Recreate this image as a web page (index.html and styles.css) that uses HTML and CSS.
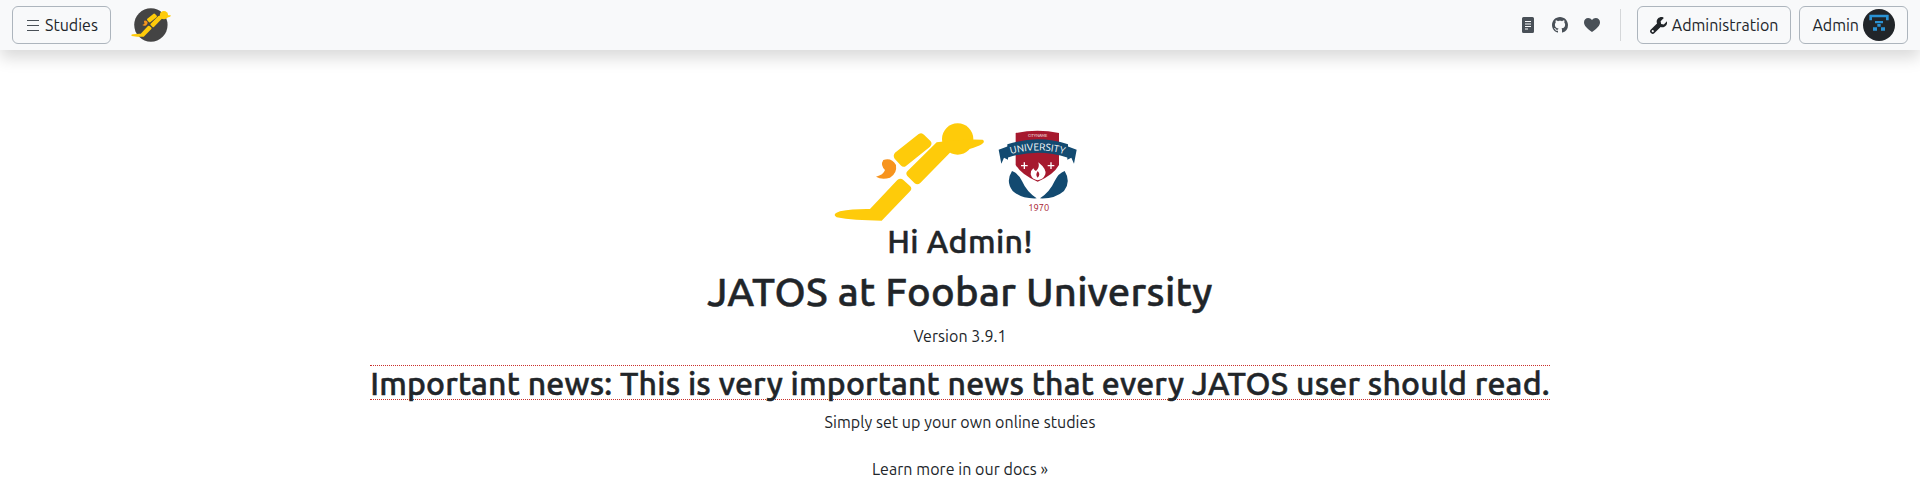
FILE: index.html
```html
<!DOCTYPE html>
<html lang="en">
<head>
    <meta charset="UTF-8">
    <title>JATOS</title>
    <link rel="stylesheet" href="styles.css">
</head>
<body>
<nav class="topbar">
    <div class="topbar-left">
        <a class="btn"><span class="bars"><i></i><i></i><i></i></span>Studies</a>
        <svg class="logo-small" viewBox="0 0 540 360" width="60" height="40">
            <circle cx="260" cy="180" r="150" fill="#444"/>
            <g transform="translate(49 22) scale(.795)">
                <circle cx="413" cy="87" r="47" fill="#fecb0a"/>
                <path d="M350 97 Q420 86 488 89 Q498 96 480 106 Q440 124 392 126 L300 220 Q292 226 284 220 L262 198 Q256 190 262 184Z" fill="#fecb0a"/>
                <path d="M225 128 L296 72 Q305 66 312 74 L332 94 Q338 102 330 110 L258 168 Q250 174 242 166 L224 146 Q218 136 225 128Z" fill="#fecb0a"/>
                <path d="M232 210 Q242 202 250 210 L270 228 Q278 236 270 244 L185 332 Q100 332 50 322 Q34 312 60 304 Q100 296 150 297Z" fill="#fecb0a"/>
                <path d="M190 150 Q215 142 228 165 Q232 190 210 203 Q185 210 168 200 Q190 195 195 180 Q180 165 190 150Z" fill="#f7941e"/>
            </g>
        </svg>
    </div>
    <div class="topbar-right">
        <div class="icons">
            <svg viewBox="0 0 16 16" width="16" height="16"><path fill="#495057" fill-rule="evenodd" d="M3.500 0h9A1.500 1.500 0 0 1 14 1.500v13a1.500 1.500 0 0 1-1.500 1.500h-9A1.500 1.500 0 0 1 2 14.500v-13A1.500 1.500 0 0 1 3.500 0zM5 4v1h6V4H5zm0 2.500v1h6v-1H5zM5 9v1h6V9H5zm0 2.500v1h3v-1H5z"/></svg>
            <svg viewBox="0 0 16 16" width="16" height="16"><path fill="#495057" d="M8 0C3.58 0 0 3.58 0 8c0 3.540 2.290 6.530 5.470 7.590.4.070.55-.17.55-.38 0-.19-.01-.82-.01-1.490-2.010.37-2.530-.49-2.690-.94-.09-.23-.48-.94-.82-1.130-.28-.15-.68-.52-.01-.53.63-.01 1.080.58 1.230.82.72 1.210 1.870.87 2.330.66.07-.52.28-.87.51-1.070-1.780-.2-3.640-.89-3.640-3.950 0-.87.31-1.590.82-2.150-.08-.2-.36-1.020.08-2.120 0 0 .67-.21 2.200.82.64-.18 1.320-.27 2-.27s1.360.09 2 .27c1.530-1.040 2.200-.82 2.200-.82.44 1.100.16 1.920.08 2.120.51.56.82 1.270.82 2.150 0 3.070-1.870 3.750-3.650 3.950.29.25.54.73.54 1.480 0 1.070-.01 1.930-.01 2.200 0 .21.15.46.55.38A8.010 8.010 0 0 0 16 8c0-4.420-3.580-8-8-8z"/></svg>
            <svg viewBox="0 0 16 16" width="16" height="16"><path fill="#495057" d="M8 15C3 11.500 0 8.500 0 5.200 0 2.800 1.900 1 4.200 1 5.700 1 7.100 1.800 8 3.100 8.900 1.800 10.300 1 11.800 1 14.100 1 16 2.800 16 5.200 16 8.500 13 11.500 8 15z"/></svg>
        </div>
        <div class="divider"></div>
        <a class="btn btn-admin"><svg viewBox="0 0 16 16" width="17" height="17"><path fill="#212529" fill-rule="evenodd" d="M16 4l-3 3-2.500-.5L10 4l3-3-.8-.8C10.500-.300 8.700.200 7.500 1.400 6.200 2.700 6 4.500 6.600 6L.6 12c-.8.800-.8 2 0 2.800l.6.600c.8.800 2 .8 2.800 0l6-6c1.500.6 3.300.4 4.600-.9 1.300-1.300 1.800-3.100 1.400-4.800zM2.600 12.300a1 1 0 1 1 0 2 1 1 0 0 1 0-2z"/></svg>Administration</a>
        <a class="btn">Admin<svg class="avatar" viewBox="0 0 96 96" width="32" height="32">
            <circle cx="48" cy="48" r="48" fill="#212529"/>
            <path fill="#2a93d5" d="M19 17h58v17h-8v-9H27v9h-8zM36 36h24v7H36zM30 55h12v10H30zM54 55h12v10H54zM43 45h10v8H43z"/>
        </svg></a>
    </div>
</nav>
<main class="welcome">
    <div class="logos">
        <svg viewBox="0 39 495 297" width="165" height="99">
            <circle cx="413" cy="87" r="47" fill="#fecb0a"/>
            <path d="M350 97 Q420 86 488 89 Q498 96 480 106 Q440 124 392 126 L300 220 Q292 226 284 220 L262 198 Q256 190 262 184Z" fill="#fecb0a"/>
            <path d="M225 128 L296 72 Q305 66 312 74 L332 94 Q338 102 330 110 L258 168 Q250 174 242 166 L224 146 Q218 136 225 128Z" fill="#fecb0a"/>
            <path d="M232 210 Q242 202 250 210 L270 228 Q278 236 270 244 L185 332 Q100 332 50 322 Q34 312 60 304 Q100 296 150 297Z" fill="#fecb0a"/>
            <path d="M190 150 Q215 142 228 165 Q232 190 210 203 Q185 210 168 200 Q190 195 195 180 Q180 165 190 150Z" fill="#f7941e"/>
        </svg>
        <svg viewBox="45 24 345 297" width="115" height="99">
            <path d="M137 54 Q203 40 267 54 V150 Q250 180 203 200 Q155 180 137 150Z" fill="#a6192e"/>
            <path d="M86 104 L114 94 V134 L102 128 L94 146Z M320 104 L292 94 V134 L304 128 L312 146Z" fill="#134a70"/>
            <path d="M112 88 Q203 58 294 88 V128 Q203 98 112 128Z" fill="#134a70"/>
            <path id="ribbonText" d="M114 120 Q203 92 292 120" fill="none"/>
            <text class="crest-name"><textPath href="#ribbonText" startOffset="50%">UNIVERSITY</textPath></text>
            <text x="203" y="66" class="crest-city">CITYNAME</text>
            <path d="M205 142 Q230 162 226 178 Q220 194 203 196 Q186 194 182 178 Q182 166 190 160 Q194 168 198 168 Q210 158 205 142Z" fill="#fff"/>
            <path d="M203 168 Q213 178 203 188 Q195 180 203 168Z" fill="#a6192e"/>
            <path d="M153 152h20M163 142v20M233 152h20M243 142v20" stroke="#fff" stroke-width="4"/>
            <path d="M126 168 Q106 200 128 228 Q155 252 200 250 Q170 230 156 198 Q144 174 126 168Z" fill="#134a70"/>
            <path d="M284 168 Q304 200 282 228 Q255 252 210 250 Q240 230 254 198 Q266 174 284 168Z" fill="#134a70"/>
            <text x="206" y="287" class="crest-year">1970</text>
        </svg>
    </div>
    <h2 class="hi">Hi Admin!</h2>
    <h1 class="title">JATOS at Foobar University</h1>
    <p class="line version">Version 3.9.1</p>
    <h2 class="news">Important news: This is very important news that every JATOS user should read.</h2>
    <p class="line">Simply set up your own online studies</p>
    <p class="line more">Learn more in our docs »</p>
</main>
</body>
</html>
```

FILE: styles.css
```css
* {
    box-sizing: border-box;
}

body {
    margin: 0;
    font-family: "Ubuntu", "Noto Sans", sans-serif;
    color: #212529;
    background: #fff;
}

.topbar {
    height: 50px;
    padding: 0 12px;
    background: #f8f9fa;
    box-shadow: 0 8px 16px rgba(0, 0, 0, .15);
    display: flex;
    justify-content: space-between;
    align-items: center;
}

.topbar-left, .topbar-right, .icons {
    display: flex;
    align-items: center;
}

.topbar-left {
    gap: 11px;
}

.topbar-right {
    gap: 8px;
}

.icons {
    gap: 16px;
}

.divider {
    width: 1px;
    height: 32px;
    background: #d5d7d9;
    margin: 0 8px 0 12px;
}

.btn {
    display: flex;
    align-items: center;
    gap: 4px;
    height: 38px;
    padding: 0 12px;
    border: 1px solid #adb5bd;
    border-radius: 6px;
    font-size: 16px;
}

.btn-admin {
    gap: 5px;
}

.bars {
    width: 12px;
    margin: 0 2px;
    display: flex;
    flex-direction: column;
    gap: 4px;
}

.bars i {
    height: 1px;
    background: #495057;
}

.welcome {
    padding-top: 73px;
    display: flex;
    flex-direction: column;
    align-items: center;
}

.logos {
    display: flex;
}

.crest-name {
    font-size: 30px;
    fill: #fff;
    text-anchor: middle;
}

.crest-city {
    font-size: 12px;
    fill: #fff;
    text-anchor: middle;
}

.crest-year {
    font-size: 28px;
    fill: #a6192e;
    text-anchor: middle;
}

.hi, .title, .news {
    font-weight: 500;
    -webkit-text-stroke: .5px #212529;
}

.hi {
    margin: 0;
    font-size: 32px;
    line-height: 38px;
    letter-spacing: .4px;
}

.title {
    margin: 8px 0;
    font-size: 40px;
    line-height: 48px;
    letter-spacing: .28px;
}

.line {
    margin: 0 0 23px;
    font-size: 16px;
    line-height: 24px;
    letter-spacing: .05px;
}

.version {
    margin-bottom: 17px;
}

.news {
    margin: 0 0 10px;
    padding-top: 1px;
    font-size: 32px;
    line-height: 32px;
    letter-spacing: .19px;
    border-top: 1px dotted #c9302c;
    border-bottom: 1px dotted #c9302c;
}
```
